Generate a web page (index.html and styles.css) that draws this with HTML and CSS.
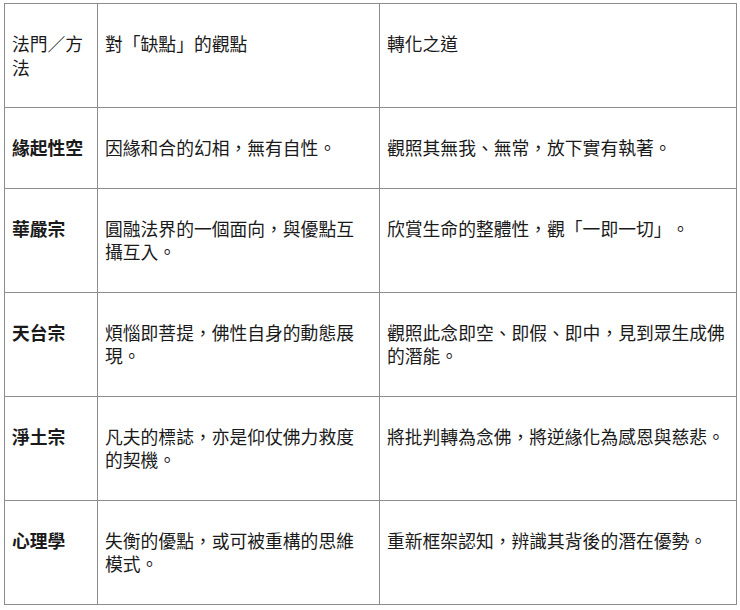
FILE: index.html
```html
<!DOCTYPE html>
<html lang="zh-Hant">
<head>
<meta charset="utf-8">
<link rel="stylesheet" href="styles.css">
</head>
<body>
<table class="grid">
  <colgroup>
    <col class="c1">
    <col class="c2">
    <col class="c3">
  </colgroup>
  <thead>
    <tr>
      <th>法門／方法</th>
      <th>對「缺點」的觀點</th>
      <th>轉化之道</th>
    </tr>
  </thead>
  <tbody>
    <tr>
      <td class="name">緣起性空</td>
      <td>因緣和合的幻相，無有自性。</td>
      <td>觀照其無我、無常，放下實有執著。</td>
    </tr>
    <tr>
      <td class="name">華嚴宗</td>
      <td>圓融法界的一個面向，與優點互攝互入。</td>
      <td>欣賞生命的整體性，觀「一即一切」。</td>
    </tr>
    <tr>
      <td class="name">天台宗</td>
      <td>煩惱即菩提，佛性自身的動態展現。</td>
      <td>觀照此念即空、即假、即中，見到眾生成佛的潛能。</td>
    </tr>
    <tr>
      <td class="name">淨土宗</td>
      <td>凡夫的標誌，亦是仰仗佛力救度的契機。</td>
      <td>將批判轉為念佛，將逆緣化為感恩與慈悲。</td>
    </tr>
    <tr>
      <td class="name">心理學</td>
      <td>失衡的優點，或可被重構的思維模式。</td>
      <td>重新框架認知，辨識其背後的潛在優勢。</td>
    </tr>
  </tbody>
</table>
</body>
</html>
```

FILE: styles.css
```css
html, body {
  margin: 0;
  padding: 0;
  background: #ffffff;
}

body {
  font-family: "Noto Sans CJK TC", "Liberation Sans", sans-serif;
  color: #1a1a1a;
}

.grid {
  margin: 3px 0 0 4px;
  width: 732px;
  border-collapse: collapse;
  table-layout: fixed;
  font-size: 17.8px;
  line-height: 23.5px;
  text-spacing-trim: space-all;
}

.c1 { width: 93px; }
.c2 { width: 282px; }
.c3 { width: 357px; }

.grid th,
.grid td {
  border: 1px solid #8c8c8c;
  padding: 28px 8px 28px 7px;
  text-align: left;
  vertical-align: top;
  font-weight: normal;
}

.grid td.name {
  font-weight: bold;
}
```
